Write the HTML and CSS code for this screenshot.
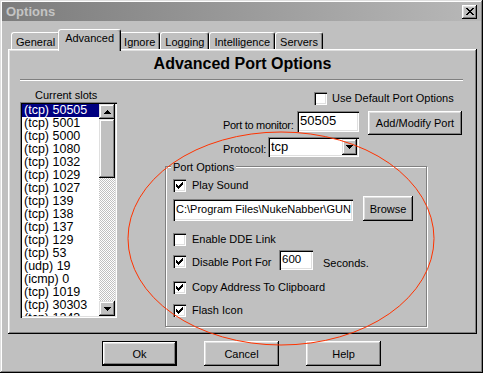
FILE: index.html
```html
<!DOCTYPE html>
<html lang="en">
<head>
    <meta charset="UTF-8">
    <meta name="viewport" content="width=device-width, initial-scale=1.0">
    <title>Options</title>
    <link rel="stylesheet" href="styles.css">
</head>
<body>
<div class="window">
    <div class="titlebar">
        <span class="title">Options</span>
        <span class="close-btn">
            <svg width="8" height="7" viewBox="0 0 8 7" shape-rendering="crispEdges"><path d="M0 0h2v1h-2z M6 0h2v1h-2z M1 1h2v1h-2z M5 1h2v1h-2z M2 2h4v1h-4z M3 3h2v1h-2z M2 4h4v1h-4z M1 5h2v1h-2z M5 5h2v1h-2z M0 6h2v1h-2z M6 6h2v1h-2z" fill="#000"/></svg>
        </span>
    </div>

    <div class="tabs">
        <div class="tab">General</div>
        <div class="tab active">Advanced</div>
        <div class="tab">Ignore</div>
        <div class="tab">Logging</div>
        <div class="tab">Intelligence</div>
        <div class="tab">Servers</div>
    </div>

    <div class="panel">
        <div class="panel-title">Advanced Port Options</div>
        <div class="separator"></div>

        <div class="panel-body">
            <div class="slots">
                <div class="slots-label">Current slots</div>
                <div class="listbox">
                    <ul class="list-items">
                        <li class="selected">(tcp) 50505</li>
                        <li>(tcp) 5001</li>
                        <li>(tcp) 5000</li>
                        <li>(tcp) 1080</li>
                        <li>(tcp) 1032</li>
                        <li>(tcp) 1029</li>
                        <li>(tcp) 1027</li>
                        <li>(tcp) 139</li>
                        <li>(tcp) 138</li>
                        <li>(tcp) 137</li>
                        <li>(tcp) 129</li>
                        <li>(tcp) 53</li>
                        <li>(udp) 19</li>
                        <li>(icmp) 0</li>
                        <li>(tcp) 1019</li>
                        <li>(tcp) 30303</li>
                        <li>(tcp) 1243</li>
                    </ul>
                    <div class="scrollbar">
                        <div class="sb-btn">
                            <svg width="7" height="4" viewBox="0 0 7 4" shape-rendering="crispEdges"><path d="M3 0h1v1h1v1h1v1h1v1h-7v-1h1v-1h1v-1h1z" fill="#000"/></svg>
                        </div>
                        <div class="sb-thumb"></div>
                        <div class="sb-track"></div>
                        <div class="sb-btn">
                            <svg width="7" height="4" viewBox="0 0 7 4" shape-rendering="crispEdges"><path d="M0 0h7v1h-1v1h-1v1h-1v1h-1v-1h-1v-1h-1v-1h-1z" fill="#000"/></svg>
                        </div>
                    </div>
                </div>
            </div>

            <div class="settings">
                <div class="row default-row">
                    <span class="checkbox"></span>
                    <span class="check-label">Use Default Port Options</span>
                </div>

                <div class="row monitor-row">
                    <label class="monitor-label">Port to monitor:</label>
                    <div class="field port-field">50505</div>
                    <button class="btn add-btn">Add/Modify Port</button>
                </div>

                <div class="row protocol-row">
                    <label class="protocol-label">Protocol:</label>
                    <div class="field combo">
                        <span class="combo-text">tcp</span>
                        <span class="combo-btn">
                            <svg width="7" height="4" viewBox="0 0 7 4" shape-rendering="crispEdges"><path d="M0 0h7v1h-1v1h-1v1h-1v1h-1v-1h-1v-1h-1v-1h-1z" fill="#000"/></svg>
                        </span>
                    </div>
                </div>

                <div class="group">
                    <div class="legend">Port Options</div>

                    <div class="row option-row play-row">
                        <span class="checkbox checked"><svg width="7" height="7" viewBox="0 0 7 7" shape-rendering="crispEdges"><path d="M0 2H1V3H2V4H3V3H4V2H5V1H6V0H7V3H6V4H5V5H4V6H3V7H2V6H1V5H0Z" fill="#000"/></svg></span>
                        <span class="check-label">Play Sound</span>
                    </div>

                    <div class="row path-row">
                        <div class="field path-field">C:\Program Files\NukeNabber\GUN</div>
                        <button class="btn browse-btn">Browse</button>
                    </div>

                    <div class="row option-row dde-row">
                        <span class="checkbox"></span>
                        <span class="check-label">Enable DDE Link</span>
                    </div>

                    <div class="row disable-row">
                        <span class="checkbox checked"><svg width="7" height="7" viewBox="0 0 7 7" shape-rendering="crispEdges"><path d="M0 2H1V3H2V4H3V3H4V2H5V1H6V0H7V3H6V4H5V5H4V6H3V7H2V6H1V5H0Z" fill="#000"/></svg></span>
                        <span class="check-label disable-label">Disable Port For</span>
                        <div class="field seconds-field">600</div>
                        <span class="seconds-label">Seconds.</span>
                    </div>

                    <div class="row option-row copy-row">
                        <span class="checkbox checked"><svg width="7" height="7" viewBox="0 0 7 7" shape-rendering="crispEdges"><path d="M0 2H1V3H2V4H3V3H4V2H5V1H6V0H7V3H6V4H5V5H4V6H3V7H2V6H1V5H0Z" fill="#000"/></svg></span>
                        <span class="check-label">Copy Address To Clipboard</span>
                    </div>

                    <div class="row option-row flash-row">
                        <span class="checkbox checked"><svg width="7" height="7" viewBox="0 0 7 7" shape-rendering="crispEdges"><path d="M0 2H1V3H2V4H3V3H4V2H5V1H6V0H7V3H6V4H5V5H4V6H3V7H2V6H1V5H0Z" fill="#000"/></svg></span>
                        <span class="check-label">Flash Icon</span>
                    </div>
                </div>
            </div>
        </div>
    </div>

    <div class="footer">
        <button class="btn dialog-btn default">Ok</button>
        <button class="btn dialog-btn">Cancel</button>
        <button class="btn dialog-btn">Help</button>
    </div>

    <!-- hand-drawn red circle over the port options -->
    <svg class="annotation" width="483" height="373" viewBox="0 0 483 373">
        <ellipse cx="281" cy="238.5" rx="153" ry="106.5" fill="none" stroke="#ff3300" stroke-width="1"/>
    </svg>
</div>
</body>
</html>
```

FILE: styles.css
```css
* {
    box-sizing: border-box;
}
body {
    margin: 0;
    font-family: "Liberation Sans", Arial, sans-serif;
    font-size: 11px;
    color: #000;
    background: #c0c0c0;
}
.window {
    position: relative;
    width: 483px;
    height: 373px;
    padding: 2px;
    background: #c0c0c0;
    box-shadow: inset -1px -1px #000, inset 1px 1px #dfdfdf, inset -2px -2px #808080, inset 2px 2px #fff;
}

/* title bar */
.titlebar {
    display: flex;
    align-items: center;
    height: 19px;
    padding: 0 4px;
    background: linear-gradient(to right, #7c7c7c, #b8b8b8);
}
.title {
    flex: 1;
    font-size: 13px;
    font-weight: bold;
    color: #c4c4c4;
}
.close-btn {
    display: flex;
    align-items: center;
    justify-content: center;
    width: 15px;
    height: 14px;
    background: #c0c0c0;
    box-shadow: inset -1px -1px #000, inset 1px 1px #fff, inset -2px -2px #808080, inset 2px 2px #dfdfdf;
}

/* raised / sunken bits */
.btn {
    font-family: inherit;
    font-size: 11px;
    color: #000;
    background: #c0c0c0;
    border: none;
    padding: 0;
    box-shadow: inset -1px -1px #000, inset 1px 1px #fff, inset -2px -2px #808080, inset 2px 2px #dfdfdf;
}
.field {
    background: #fff;
    padding: 0 3px;
    white-space: nowrap;
    overflow: hidden;
    box-shadow: inset 1px 1px #808080, inset 2px 2px #000, inset -1px -1px #fff, inset -2px -2px #dfdfdf;
}

/* tabs */
.tabs {
    display: flex;
    align-items: flex-end;
    height: 20px;
    margin-top: 8px;
    padding-left: 9px;
}
.tab {
    height: 17px;
    padding: 2px 4px 0;
    line-height: 14px;
    border-top: 1px solid #fff;
    border-left: 1px solid #fff;
    border-right: 1px solid #000;
    border-radius: 3px 3px 0 0;
    box-shadow: inset -1px 0 #808080;
}
.tab.active {
    position: relative;
    z-index: 1;
    height: 22px;
    margin: 0 -2px -2px;
    padding: 1px 6px 0;
    background: #c0c0c0;
}

/* tab panel */
.panel {
    height: 285px;
    margin: 0 4px 0 6px;
    padding: 2px;
    box-shadow: inset -1px -1px #000, inset 1px 1px #fff, inset -2px -2px #808080, inset 2px 2px #dfdfdf;
}
.panel-title {
    height: 20px;
    margin-top: 3px;
    line-height: 20px;
    text-align: center;
    font-size: 16px;
    font-weight: bold;
}
.separator {
    height: 2px;
    margin: 5px 12px 0 10px;
    border-top: 1px solid #808080;
    border-bottom: 1px solid #fff;
}
.panel-body {
    display: flex;
    align-items: flex-start;
    margin-top: 8px;
    padding: 0 12px 0 10px;
}

/* list of slots */
.slots {
    width: 97px;
}
.slots-label {
    height: 13px;
    line-height: 13px;
    padding-left: 15px;
}
.listbox {
    display: flex;
    height: 216px;
    padding: 2px;
    background: #fff;
    box-shadow: inset 1px 1px #808080, inset 2px 2px #000, inset -1px -1px #fff, inset -2px -2px #dfdfdf;
}
.list-items {
    flex: 1;
    margin: 0;
    padding: 0;
    list-style: none;
    overflow: hidden;
    font-size: 12.5px;
}
.list-items li {
    height: 13px;
    line-height: 13px;
    padding-left: 2px;
    white-space: nowrap;
}
.list-items li.selected {
    background: #000080;
    color: #fff;
}
.scrollbar {
    display: flex;
    flex-direction: column;
    width: 16px;
}
.sb-btn {
    display: flex;
    align-items: center;
    justify-content: center;
    height: 15px;
    background: #c0c0c0;
    box-shadow: inset -1px -1px #000, inset 1px 1px #dfdfdf, inset -2px -2px #808080, inset 2px 2px #fff;
}
.sb-thumb {
    height: 59px;
    background: #c0c0c0;
    box-shadow: inset -1px -1px #000, inset 1px 1px #dfdfdf, inset -2px -2px #808080, inset 2px 2px #fff;
}
.sb-track {
    flex: 1;
    background: repeating-conic-gradient(#c0c0c0 0 25%, #fff 0 50%) 0 0 / 2px 2px;
}

/* right hand settings */
.settings {
    flex: 1;
    margin-left: 48px;
}
.row {
    display: flex;
}
.checkbox {
    display: flex;
    align-items: center;
    justify-content: center;
    flex: none;
    width: 13px;
    height: 13px;
    background: #fff;
    box-shadow: inset 1px 1px #808080, inset 2px 2px #000, inset -1px -1px #fff, inset -2px -2px #dfdfdf;
}
.check-label {
    margin-left: 6px;
    line-height: 13px;
    white-space: nowrap;
}
.default-row {
    height: 13px;
    margin-top: 3px;
    padding-left: 149px;
}
.default-row .check-label {
    margin-left: 5px;
}
.monitor-row {
    margin-top: 6px;
    padding-left: 58px;
}
.monitor-label {
    width: 74px;
    margin-top: 8px;
    line-height: 13px;
    letter-spacing: -0.3px;
    white-space: nowrap;
}
.port-field {
    width: 62px;
    height: 21px;
    line-height: 19px;
    font-size: 13px;
}
.add-btn {
    width: 94px;
    height: 24px;
    margin-left: 9px;
}
.protocol-row {
    margin-top: 2px;
    padding-left: 58px;
}
.protocol-label {
    width: 45px;
    margin-top: 6px;
    line-height: 13px;
}
.combo {
    display: flex;
    width: 91px;
    height: 20px;
    padding: 2px 2px 2px 3px;
}
.combo-text {
    flex: 1;
    line-height: 15px;
    font-size: 13px;
}
.combo-btn {
    display: flex;
    align-items: center;
    justify-content: center;
    width: 15px;
    height: 16px;
    background: #c0c0c0;
    box-shadow: inset -1px -1px #000, inset 1px 1px #dfdfdf, inset -2px -2px #808080, inset 2px 2px #fff;
}

/* port options group */
.group {
    width: 262px;
    margin-top: 9px;
    padding: 0 0 9px 7px;
    border: 1px solid #808080;
    box-shadow: 1px 1px #fff, inset 1px 1px #fff;
}
.legend {
    width: max-content;
    height: 13px;
    margin: -6px 0 0 -2px;
    padding: 0 2px;
    line-height: 13px;
    background: #c0c0c0;
}
.play-row {
    margin-top: 5px;
}
.path-row {
    align-items: flex-end;
    margin-top: 4px;
}
.path-field {
    width: 180px;
    height: 22px;
    line-height: 21px;
}
.browse-btn {
    width: 50px;
    height: 25px;
    margin-left: 10px;
}
.dde-row {
    margin-top: 12px;
}
.disable-row {
    align-items: flex-end;
    margin-top: 4px;
}
.disable-row .checkbox {
    margin-bottom: 2px;
}
.disable-label {
    width: 87px;
    margin-bottom: 1px;
}
.seconds-field {
    width: 34px;
    height: 20px;
    line-height: 19px;
    font-size: 11.5px;
}
.seconds-label {
    margin-left: 10px;
    line-height: 13px;
}
.copy-row {
    margin-top: 11px;
}
.flash-row {
    margin-top: 10px;
}

/* dialog buttons */
.footer {
    display: flex;
    justify-content: center;
    gap: 27px;
    margin-top: 7px;
}
.dialog-btn {
    width: 75px;
    height: 25px;
}
.dialog-btn.default {
    border: 1px solid #000;
}

.annotation {
    position: absolute;
    top: 0;
    left: 0;
    pointer-events: none;
}
```
